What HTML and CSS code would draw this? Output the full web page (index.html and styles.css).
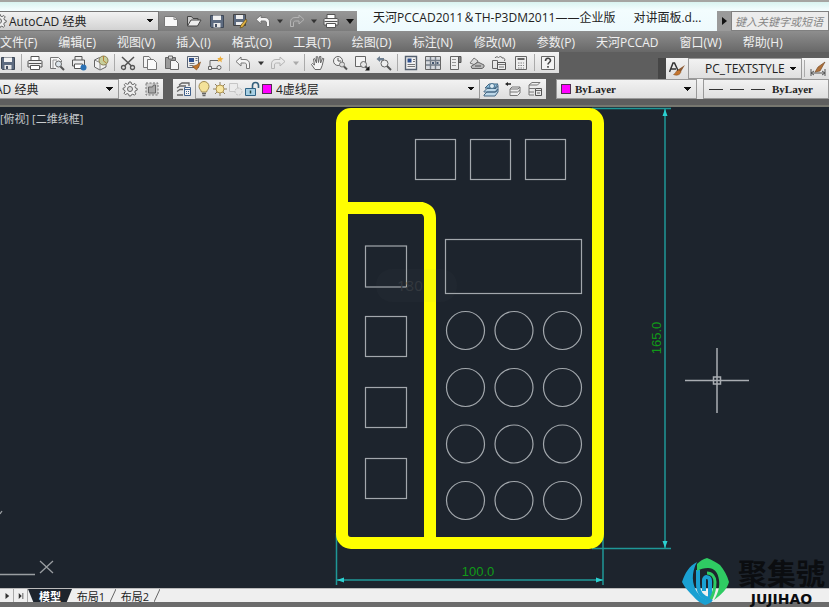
FILE: index.html
```html
<!DOCTYPE html>
<html lang="zh-CN">
  <head>
    <meta charset="UTF-8" />
    <meta name="viewport" content="width=device-width, initial-scale=1.0" />
    <title>天河PCCAD2011</title>
    <link rel="stylesheet" href="styles.css">
  </head>
  <body>
    <!-- icon set -->
    <svg class="sprite" aria-hidden="true">
      <symbol id="gear" viewBox="0 0 16 16"><path d="M7 1h2l.5 2 1.5.6L12.800 2.500l1.400 1.400L13 5.600l.5 1.400 1.700.5v1.600l-1.800.6-.6 1.400 1 1.800-1.300 1.300-1.700-1-1.500.6L8.800 15H7.200l-.6-1.800-1.500-.6-1.700 1-1.300-1.300 1-1.800-.6-1.400L1 8.500V7.200l1.700-.5.6-1.400-1-1.700 1.300-1.300 1.700 1L6.500 3z" fill="#eee" stroke="#666" /><circle cx="8" cy="8" r="2.500" fill="#ddd" stroke="#666" /></symbol>
      <symbol id="new" viewBox="0 0 16 16"><path d="M1.500 3.500h9.500l3.500 3v7h-13z" fill="#f8f8f8" stroke="#777" /><path d="M11 3.500v3h3.500" fill="none" stroke="#888" /></symbol>
      <symbol id="open" viewBox="0 0 16 16"><path d="M1.500 13V3.500h4l1.500 2h5V7" fill="#ccc" stroke="#444" /><path d="M1.500 13 5 7h10l-3.500 6z" fill="#eee" stroke="#444" /></symbol>
      <symbol id="save" viewBox="0 0 16 16"><path d="M1.500 2.500h13v12h-12l-1-1z" fill="#5d6b80" stroke="#3e4857" /><path d="M4 2.500h8v4.500H4z" fill="#f2f2f2" /><path d="M4.500 10h7v4.500h-7z" fill="#e8e8e8" /><path d="M6 11h2v3H6z" fill="#465063" /></symbol>
      <symbol id="saveas" viewBox="0 0 16 16"><path d="M1.500 1.500h12v11h-12z" fill="#5d6b80" stroke="#444" /><path d="M4 2h7v4H4zM4 9h7v3H4z" fill="#eee" /><path d="m14 6-5 6-1 3 3-1 4-6z" fill="#e0b040" stroke="#5c4a20" stroke-width=".7" /></symbol>
      <symbol id="undo" viewBox="0 0 16 16"><path d="M1 6.500 6 2v2.500h4c3 0 4.500 2 4.500 4.500v4.500h-3V10c0-1.500-1-2-2-2H6v3z" fill="#f4f4f4" stroke="#777" stroke-linejoin="round" /></symbol>
      <symbol id="redo" viewBox="0 0 16 16"><path d="M15 6.500 10 2v2.500H6C3 4.500 1.500 6.500 1.500 9v4.500h3V10c0-1.500 1-2 2-2H10v3z" fill="none" stroke="#b4b4b4" stroke-linejoin="round" /></symbol>
      <symbol id="print" viewBox="0 0 16 16"><path d="M4 6V1.500h8V6" fill="#fff" stroke="#555" /><path d="M1 6.500c0-.5.500-1 1-1h12c.500 0 1 .5 1 1V12H1z" fill="#eee" stroke="#555" /><path d="M1.500 8.500h13" stroke="#555" /><path d="M3.500 10.500h9v4h-9z" fill="#fff" stroke="#555" /></symbol>
      <symbol id="preview" viewBox="0 0 16 16"><path d="M7 13.500H1.500v-11h8l3 3V7" fill="#f6f6f6" stroke="#777" /><path d="M4 13V5h4" fill="none" stroke="#999" /><circle cx="9.500" cy="9" r="3" fill="#dde6ec" stroke="#666" /><path d="m11.500 11.500 3.500 3.500" stroke="#555" stroke-width="2" /></symbol>
      <symbol id="publish" viewBox="0 0 16 16"><path d="M4 5V1.500h7V5M1.500 5h12v6h-12z" fill="#eee" stroke="#555" /><path d="M3.500 9h8v4.500h-8z" fill="#fff" stroke="#555" /><circle cx="12.500" cy="12.500" r="3" fill="#2b72b5" /></symbol>
      <symbol id="box" viewBox="0 0 16 16"><path d="m1.500 5 5-2.500L13 5v7l-6 3-5.500-3z" fill="#f1f1f1" stroke="#666" /><path d="M1.500 5 7 7.500V15M7 7.500 13 5" fill="none" stroke="#888" /><circle cx="10.500" cy="5.500" r="4.500" fill="#c6cf9c" stroke="#8a7f55" /><path d="M10.500 1v5l3 2" fill="none" stroke="#b98236" /></symbol>
      <symbol id="cut" viewBox="0 0 16 16"><path d="m2 2 9.500 9M14 2l-9.500 9" stroke="#555" stroke-width="1.500" /><circle cx="3.500" cy="12.500" r="2" fill="none" stroke="#555" stroke-width="1.300" /><circle cx="12.500" cy="12.500" r="2" fill="none" stroke="#555" stroke-width="1.300" /></symbol>
      <symbol id="copy" viewBox="0 0 16 16"><path d="M1.500 1.500H7L9 4v8.500H1.500z" fill="#f4f4f4" stroke="#777" /><path d="M5.500 4.500h6l3 3v7h-9z" fill="#fafafa" stroke="#777" /></symbol>
      <symbol id="paste" viewBox="0 0 16 16"><path d="M1.500 2.500h10v11h-10z" fill="#9a9a9a" stroke="#666" /><path d="M4.500 1h4v3h-4z" fill="#ddd" stroke="#666" /><path d="M6.500 5.500h5l3 3v6h-8z" fill="#f6f6f6" stroke="#666" /></symbol>
      <symbol id="match" viewBox="0 0 16 16"><path d="M1.500 1.500h11v11h-11z" fill="#eee" stroke="#5a6474" /><path d="M3 3h5v4H3z" fill="#2d4f8e" /><path d="M9.500 3.500h2m-2 2h2m-8 3h5m-5 2h4" stroke="#777" /><path d="m14.500 7-4 3-4 1.500 4 3.500 2.500-3.500z" fill="#c2762b" stroke="#7d4a1a" stroke-width=".6" /></symbol>
      <symbol id="blockedit" viewBox="0 0 16 16"><path d="M2 12V5.500h8M1 13.500h9" fill="none" stroke="#666" /><path d="M.500 11.500h3v3h-3z" fill="#eee" stroke="#666" /><circle cx="11" cy="12.500" r="2" fill="#eee" stroke="#666" /><path d="m12.500 1 .7 2 2.300.5-2 1.500.3 2.500L12 6 9.500 7l1-2-1-2h2z" fill="#eeae3b" /></symbol>
      <symbol id="pan" viewBox="0 0 16 16"><path d="M5 14.500 1.500 9.500 2.500 8.500l2 1.500-1-6 1.200-.5L6.500 8 6.200 1.700h1.500L8.500 7.500l1-6h1.400l-.3 6.500 2-4.800 1.200.5-1.600 6.800-1.700 4z" fill="#f5f5f5" stroke="#666" stroke-linejoin="round" /></symbol>
      <symbol id="zoomrt" viewBox="0 0 16 16"><circle cx="6" cy="6" r="4.500" fill="#f2f2f2" stroke="#666" /><path d="M6 3v3h3" fill="none" stroke="#555" /><circle cx="10" cy="9.500" r="2.500" fill="#ddd" stroke="#777" /><path d="m12 11.500 3 3" stroke="#555" stroke-width="2" /></symbol>
      <symbol id="zoomwin" viewBox="0 0 16 16"><path d="M1.500 1.500h10v10h-10z" fill="#f4f4f4" stroke="#666" /><circle cx="9.500" cy="9.500" r="3" fill="#e6e6e6" stroke="#666" /><path d="m11.500 11.500 2 2" stroke="#555" stroke-width="2" /><path d="M15.500 11v4.500H11z" fill="#111" /></symbol>
      <symbol id="zoomprev" viewBox="0 0 16 16"><path d="M.500 4 4 1v2h4v2.500H4V7z" fill="#6e7f91" /><circle cx="8.500" cy="8.500" r="3.500" fill="#eee" stroke="#666" /><path d="m11 11 4 4" stroke="#555" stroke-width="2" /></symbol>
      <symbol id="props" viewBox="0 0 16 16"><path d="M2.500 1.500h11v13h-11z" fill="#f2f2f2" stroke="#55606f" stroke-width="1.400" /><path d="M4.500 3.500h4v4h-4z" fill="#2d4f8e" /><path d="M10 4.500h2M10 6.500h2m-7.500 3h7.500m-7.500 2h7.500" stroke="#777" /></symbol>
      <symbol id="design" viewBox="0 0 16 16"><path d="M.500 1.500h15v13H.500z" fill="#d7dade" stroke="#666" /><path d="M5.500 2v12M10.500 2v12M1 5.500h14M1 10h14" stroke="#747d88" stroke-width="1.400" /><path d="M7 7h2v2H7zm4.500 0h2v2h-2z" fill="#44566f" /></symbol>
      <symbol id="palette" viewBox="0 0 16 16"><path d="M3.500 1.500h8v13h-8z" fill="#eee" stroke="#666" /><path d="M5 4.500h4m-4 3h4m-4 3h4" stroke="#999" /><path d="M11.500 1.500h2.500v6h-2.500z" fill="#888" stroke="#555" /></symbol>
      <symbol id="sheet" viewBox="0 0 16 16"><path d="m1 8 4-5 4 3-3 4z" fill="#ddd" stroke="#777" /><path d="M2 11.500 9 7l6 3v2l-2 1.500H3z" fill="#b9b9b9" stroke="#666" /><path d="M6 11h6" stroke="#555" /></symbol>
      <symbol id="markup" viewBox="0 0 16 16"><path d="M1.500 5.500h5v8h-5zM4 3c1-2 3-1 3.500-.5C9 1 11 1.500 11 3c2-.5 3.500 1 2.500 3" fill="none" stroke="#666" /><path d="M6.500 7.500h8v7h-8z" fill="#eee" stroke="#555" /><path d="M7 9.500h7M8 12h5" stroke="#777" /></symbol>
      <symbol id="calc" viewBox="0 0 16 16"><path d="M2.500 1.500h11v13h-11z" fill="#eee" stroke="#666" /><path d="M4.500 4h7" stroke="#666" stroke-width="2" /><path d="M5 8h6m-6 2.500h6M5 13h6" stroke="#888" stroke-dasharray="1.500 1" /></symbol>
      <symbol id="help" viewBox="0 0 16 16"><path d="M1.500 1.500h13v13h-13z" fill="#f4f4f4" stroke="#666" /><path d="M5.500 6c0-3.500 5-3.500 5-.5 0 2-2.500 2-2.500 4M8 11v1.800" fill="none" stroke="#444" stroke-width="1.600" /></symbol>
      <symbol id="wsave" viewBox="0 0 16 16"><path d="M2 2h12v12H2z" fill="#cdcdcd" stroke="#777" stroke-dasharray="2 1.500" /><path d="M4.500 6h4l1-2h2v8h-7z" fill="#a7a7a7" stroke="#666" /></symbol>
      <symbol id="layers" viewBox="0 0 16 16"><path d="m1 7 3-2h6M1 10.500l3-2h3M1 14h6M3 4l3-2h7v3" fill="none" stroke="#666" stroke-width="1.300" /><path d="M8.500 6.500h6v8h-6z" fill="#f2f2f2" stroke="#41618c" /><path d="M9 8.500h5m-4 2h1m1 0h1m-3 2h1m1 0h1" stroke="#41618c" /></symbol>
      <symbol id="bulb" viewBox="0 0 16 16"><path d="M5.500 11C5 9 3 8 3 5.500a5 5 0 0 1 10 0C13 8 11 9 10.500 11z" fill="#f4e29a" stroke="#a28c52" /><path d="M6 12.500h4M6.500 14.500h3" stroke="#666" stroke-width="1.400" /></symbol>
      <symbol id="sun" viewBox="0 0 16 16"><path d="M8 1v14M1 8h14M3 3l10 10m0-10L3 13" stroke="#8c8064" /><circle cx="8" cy="8" r="4" fill="#f8e6a0" stroke="#b09550" /></symbol>
      <symbol id="freeze" viewBox="0 0 16 16"><path d="M1.500 2.500h8v8h-8z" fill="#ececec" stroke="#c6c6c6" /><circle cx="10.500" cy="10.500" r="3.500" fill="#e5e5e5" stroke="#bdbdbd" stroke-dasharray="2 1" /></symbol>
      <symbol id="lock" viewBox="0 0 16 16"><path d="M8.500 8V4.500a3 3 0 0 1 6 0V7" fill="none" stroke="#34607c" stroke-width="1.600" /><path d="M1.500 7.500h10v7h-10z" fill="#a7cfe3" stroke="#2e6385" /><path d="M6.500 9.500v3" stroke="#244" stroke-width="1.500" /></symbol>
      <symbol id="makecur" viewBox="0 0 16 16"><path d="m1 14 3-3h9l2-3v3l-3 4H1zM1 10.500l3-3h9l2-3v3l-3 3.500H1z" fill="#bcd7e8" stroke="#456783" /><path d="m2 7 4-4h9l-3 4z" fill="#8fbfdd" stroke="#3e6480" /><circle cx="9" cy="5" r="2.500" fill="#dcecf5" stroke="#4a7390" /></symbol>
      <symbol id="layprev" viewBox="0 0 16 16"><path d="m0 3 3-2v1.200h3v1.600H3V5z" fill="#222" /><path d="m5 8 2-2h8l-2 2zM5 8v3h7.500L15 9V6M5 11v3.500h7.500L15 12V9" fill="#eee" stroke="#777" /></symbol>
      <symbol id="laystate" viewBox="0 0 16 16"><path d="m2 4 3-2.500h8L10.500 4zM2 4v3.500h6M2 7.500V11h5M2 11v3h5" fill="#eee" stroke="#777" /><path d="M8.500 7.500h6v7h-6z" fill="#e8e8e8" stroke="#555" /><path d="M9 9.500h5M10 12h3" stroke="#666" /></symbol>
      <symbol id="brush" viewBox="0 0 16 16"><path d="m16 4-6 4-1 3 3-.5z" fill="#8c5a33" /><path d="M9.500 8.500C7 9 7.500 12 4.500 13.500c3 1.500 7 .5 7.500-3z" fill="#c5752e" stroke="#7b4618" stroke-width=".5" /><path d="M.500 11 4 2h1.500L9 9.500M2 8h5" fill="none" stroke="#333" stroke-width="1.500" /></symbol>
      <symbol id="dimstyle" viewBox="0 0 16 16"><path d="M1 8v7M15 8v7M1 12h14M4 10l-3 2 3 2m8-4 3 2-3 2" fill="none" stroke="#555" /><path d="m15 1-7 5-3 5 5-1z" fill="#b0713a" stroke="#6f4520" stroke-width=".6" /></symbol>
      <symbol id="caret" viewBox="0 0 8 8"><path d="M0 2h8L4 7z" /></symbol>
      <symbol id="last" viewBox="0 0 8 8"><path d="M1 0v8l4-4zM6 0h1v8H6z" /></symbol>
    </svg>

    <header class="titlebar">
      <div class="quick-access">
        <label class="workspace">
          <svg class="icon"><use href="#gear" /></svg>
          <select class="combo" aria-label="工作空间"><option>AutoCAD 经典</option></select>
        </label>
        <button class="qat" aria-label="新建"><svg class="icon"><use href="#new" /></svg></button>
        <button class="qat" aria-label="打开"><svg class="icon"><use href="#open" /></svg></button>
        <button class="qat" aria-label="保存"><svg class="icon"><use href="#save" /></svg></button>
        <button class="qat" aria-label="另存为"><svg class="icon"><use href="#saveas" /></svg></button>
        <button class="qat" aria-label="放弃"><svg class="icon"><use href="#undo" /></svg></button>
        <button class="drop" aria-label="放弃列表"><svg class="caret"><use href="#caret" /></svg></button>
        <button class="qat" aria-label="重做"><svg class="icon"><use href="#redo" /></svg></button>
        <button class="drop" aria-label="重做列表"><svg class="caret"><use href="#caret" /></svg></button>
        <button class="qat" aria-label="打印"><svg class="icon"><use href="#print" /></svg></button>
        <button class="drop customize" aria-label="自定义"><svg class="caret"><use href="#caret" /></svg></button>
      </div>
      <h1 class="title"><span>天河PCCAD2011＆TH-P3DM2011——企业版</span><span>对讲面板.d...</span></h1>
      <div class="search">
        <button class="expand" aria-label="展开"><svg class="caret right"><use href="#caret" /></svg></button>
        <input type="text" class="query" aria-label="搜索" placeholder="键入关键字或短语" />
      </div>
    </header>

    <nav class="menubar">
      <button>文件(F)</button>
      <button>编辑(E)</button>
      <button>视图(V)</button>
      <button>插入(I)</button>
      <button>格式(O)</button>
      <button>工具(T)</button>
      <button>绘图(D)</button>
      <button>标注(N)</button>
      <button>修改(M)</button>
      <button>参数(P)</button>
      <button>天河PCCAD</button>
      <button>窗口(W)</button>
      <button>帮助(H)</button>
    </nav>

    <div class="toolbars">
      <div class="bar standard">
        <button class="tool" aria-label="保存"><svg class="icon"><use href="#save" /></svg></button>
        <span class="sep"></span>
        <button class="tool" aria-label="打印"><svg class="icon"><use href="#print" /></svg></button>
        <button class="tool" aria-label="打印预览"><svg class="icon"><use href="#preview" /></svg></button>
        <button class="tool" aria-label="发布"><svg class="icon"><use href="#publish" /></svg></button>
        <button class="tool" aria-label="三维DWF"><svg class="icon"><use href="#box" /></svg></button>
        <span class="sep"></span>
        <button class="tool" aria-label="剪切"><svg class="icon"><use href="#cut" /></svg></button>
        <button class="tool" aria-label="复制"><svg class="icon"><use href="#copy" /></svg></button>
        <button class="tool" aria-label="粘贴"><svg class="icon"><use href="#paste" /></svg></button>
        <button class="tool" aria-label="特性匹配"><svg class="icon"><use href="#match" /></svg></button>
        <button class="tool" aria-label="块编辑器"><svg class="icon"><use href="#blockedit" /></svg></button>
        <span class="sep"></span>
        <button class="tool" aria-label="放弃"><svg class="icon"><use href="#undo" /></svg></button>
        <button class="drop" aria-label="放弃列表"><svg class="caret"><use href="#caret" /></svg></button>
        <button class="tool" aria-label="重做"><svg class="icon"><use href="#redo" /></svg></button>
        <button class="drop faded" aria-label="重做列表"><svg class="caret"><use href="#caret" /></svg></button>
        <span class="sep"></span>
        <button class="tool" aria-label="平移"><svg class="icon"><use href="#pan" /></svg></button>
        <button class="tool" aria-label="实时缩放"><svg class="icon"><use href="#zoomrt" /></svg></button>
        <button class="tool" aria-label="窗口缩放"><svg class="icon"><use href="#zoomwin" /></svg></button>
        <button class="tool" aria-label="缩放上一个"><svg class="icon"><use href="#zoomprev" /></svg></button>
        <span class="sep"></span>
        <button class="tool" aria-label="特性"><svg class="icon"><use href="#props" /></svg></button>
        <button class="tool" aria-label="设计中心"><svg class="icon"><use href="#design" /></svg></button>
        <button class="tool" aria-label="工具选项板"><svg class="icon"><use href="#palette" /></svg></button>
        <button class="tool" aria-label="图纸集"><svg class="icon"><use href="#sheet" /></svg></button>
        <button class="tool" aria-label="标记集"><svg class="icon"><use href="#markup" /></svg></button>
        <button class="tool" aria-label="计算器"><svg class="icon"><use href="#calc" /></svg></button>
        <span class="sep"></span>
        <button class="tool" aria-label="帮助"><svg class="icon"><use href="#help" /></svg></button>
      </div>
      <div class="bar styles">
        <button class="tool" aria-label="文字样式"><svg class="icon"><use href="#brush" /></svg></button>
        <select class="combo textstyle" aria-label="文字样式列表"><option>PC_TEXTSTYLE</option></select>
        <span class="sep"></span>
        <button class="tool" aria-label="标注样式"><svg class="icon"><use href="#dimstyle" /></svg></button>
      </div>
    </div>

    <div class="toolbars lower">
      <div class="bar spaces">
        <select class="combo space" aria-label="工作空间列表"><option>AutoCAD 经典</option></select>
        <button class="tool" aria-label="工作空间设置"><svg class="icon"><use href="#gear" /></svg></button>
        <button class="tool" aria-label="我的工作空间"><svg class="icon"><use href="#wsave" /></svg></button>
      </div>
      <div class="bar layerbar">
        <button class="tool" aria-label="图层特性"><svg class="icon"><use href="#layers" /></svg></button>
        <label class="layer">
          <svg class="icon"><use href="#bulb" /></svg>
          <svg class="icon"><use href="#sun" /></svg>
          <svg class="icon"><use href="#freeze" /></svg>
          <svg class="icon"><use href="#lock" /></svg>
          <span class="swatch"></span>
          <select class="combo" aria-label="图层"><option>4虚线层</option></select>
        </label>
        <button class="tool" aria-label="置为当前"><svg class="icon"><use href="#makecur" /></svg></button>
        <button class="tool" aria-label="上一个图层"><svg class="icon"><use href="#layprev" /></svg></button>
        <button class="tool" aria-label="图层状态"><svg class="icon"><use href="#laystate" /></svg></button>
      </div>
      <div class="bar propbar">
        <label class="color">
          <span class="swatch"></span>
          <select class="combo bylayer" aria-label="颜色"><option>ByLayer</option></select>
        </label>
        <label class="linetype">
          <span class="dash"></span><span class="dash"></span><span class="dash"></span>
          <select class="combo bylayer" aria-label="线型"><option>ByLayer</option></select>
        </label>
      </div>
    </div>

    <main class="canvas">
      <svg class="drawing" viewBox="0 107 829 481" preserveAspectRatio="xMidYMid slice">
        <!-- dimensions -->
        <g fill="none" stroke="#1f9797" stroke-width="1.500">
          <path d="M592 108.500h79M592 548.500h79M665 109v439" />
          <path d="M336.500 533v52M603 533v52M337 580h266" />
        </g>
        <path fill="#2bd0d0" d="m337 580 7-2.500v5zm266 0-7-2.500v5zM665 109l-2.500 7h5zm0 439-2.500-7h5z" />
        <text class="dim" x="478" y="576">100.0</text>
        <text class="dim" transform="translate(661 338) rotate(-90)">165.0</text>
        <!-- housing -->
        <g fill="none" stroke="#ffff00" stroke-width="12">
          <rect x="342" y="114" width="256" height="429" rx="9" />
          <path d="M342 208h80q8 2 8 10v325" />
        </g>
        <!-- keys -->
        <g fill="none" stroke="#a3a8ad" stroke-width="1.200">
          <rect x="415.500" y="139.500" width="40" height="40" />
          <rect x="470.500" y="139.500" width="40" height="40" />
          <rect x="525.500" y="139.500" width="40" height="40" />
          <rect x="365.500" y="246" width="41" height="41" />
          <rect x="365.500" y="316.500" width="41" height="40" />
          <rect x="365.500" y="387.500" width="41" height="40" />
          <rect x="365.500" y="458.500" width="41" height="40" />
          <rect x="445.500" y="239.500" width="136" height="54" />
          <circle cx="465.500" cy="330.500" r="19" />
          <circle cx="514" cy="330.500" r="19" />
          <circle cx="562.500" cy="330.500" r="19" />
          <circle cx="465.500" cy="387.500" r="19" />
          <circle cx="514" cy="387.500" r="19" />
          <circle cx="562.500" cy="387.500" r="19" />
          <circle cx="465.500" cy="444" r="19" />
          <circle cx="514" cy="444" r="19" />
          <circle cx="562.500" cy="444" r="19" />
          <circle cx="465.500" cy="500.500" r="19" />
          <circle cx="514" cy="500.500" r="19" />
          <circle cx="562.500" cy="500.500" r="19" />
        </g>
        <!-- crosshair -->
        <path d="M685 380.500h64M717 348v65M713.500 377h7v7h-7z" fill="none" stroke="#a9adb2" stroke-width="1.500" />
        <!-- ucs mark -->
        <path d="M0 574.500h35M40 561l13 12m0-12-13 12M0 514l2-3" fill="none" stroke="#9a9ea2" stroke-width="1.300" />
        <rect x="376" y="269" width="81" height="33" rx="16" fill="#888" fill-opacity=".04" />
        <text class="hint" x="397" y="291">180</text>
      </svg>
      <div class="viewlabel">[俯视] [二维线框]</div>
    </main>

    <footer class="tabs">
      <button class="step" aria-label="下一个"><svg class="caret right"><use href="#caret" /></svg></button>
      <button class="step" aria-label="最后一个"><svg class="caret"><use href="#last" /></svg></button>
      <button class="tab active">模型</button>
      <button class="tab">布局1</button>
      <svg class="slash" viewBox="0 0 6 13"><path d="M0 13 6 0" /></svg>
      <button class="tab">布局2</button>
      <svg class="slash" viewBox="0 0 6 13"><path d="M0 13 6 0" /></svg>
    </footer>

    <div class="brand">
      <svg class="mark" viewBox="0 0 50 50">
        <path d="M15 6C7 10 3 17 0 26c3 6 7 10 11 14 4 5 8 7 12 9 3-1 6-2 8-5-6 1-12-2-16-8-5-8-6-19 0-30z" fill="#1aa0d2" />
        <path d="M16 14v14c0 8 4 14 12 15V25c0-5-6-5-6-1v11" fill="none" stroke="#1aa0d2" stroke-width="4" />
        <path d="M15 15V8c3-3 6-5 10-6 5 2 9 4 13 7 4 5 7 10 9 17-2 7-7 12-15 18 4-7 6-13 5-20-1-8-5-12-11-12-4 0-8 1-11 3z" fill="#2fcb63" />
        <path d="M25 17c5 0 8 4 8 9 0 6-1 11-4 17" fill="none" stroke="#2fcb63" stroke-width="3" />
      </svg>
      <div class="wordmark">
        <span class="cn">聚集號</span>
        <span class="en">JUJIHAO</span>
      </div>
    </div>
  </body>
</html>
```

FILE: styles.css
```css
* {
  box-sizing: border-box;
}
body {
  margin: 0;
  height: 100vh;
  display: flex;
  flex-direction: column;
  overflow: hidden;
  position: relative;
  background-color: #5e5e5e;
  font-family: "Open Sans", "Noto Sans CJK SC", sans-serif;
  font-size: 12px;
  color: #222;
}
button,
select,
input {
  font: inherit;
  color: inherit;
  margin: 0;
  padding: 0;
  border: 0;
  background: none;
  border-radius: 0;
}
button {
  display: flex;
  align-items: center;
  justify-content: center;
  flex-shrink: 0;
  white-space: nowrap;
}
.sprite {
  display: none;
}
.icon {
  width: 16px;
  height: 16px;
  flex-shrink: 0;
}
.caret {
  width: 6px;
  height: 6px;
  fill: #333;
}
.caret.right {
  transform: rotate(-90deg);
}
.combo {
  appearance: none;
  min-width: 0;
  height: 100%;
  flex: 1;
  background: linear-gradient(to bottom right, #111 50%, transparent 50%) right 4px center / 4px 4px no-repeat,
    linear-gradient(to bottom left, #111 50%, transparent 50%) right 8px center / 4px 4px no-repeat;
}

/* title bar */
.titlebar {
  display: flex;
  height: 31px;
  padding-top: 9px;
  border-top: 2px solid #a5a5a2;
  background: linear-gradient(#d9f3f0, #f3fdfe 8px, #eefafd);
}
.quick-access {
  display: flex;
  background: linear-gradient(#979797, #7c7c7c);
}
.workspace {
  display: flex;
  align-items: center;
  width: 169px;
  margin-left: -10px;
  border: 1px solid #777;
  background: linear-gradient(#f2f2f2, #d2d2d2);
}
.workspace .combo {
  padding-left: 2px;
}
.qat {
  width: 23px;
}
.drop {
  width: 11px;
}
.faded .caret {
  fill: #aaa;
}
.customize {
  width: 15px;
}
.customize .caret {
  width: 8px;
  height: 8px;
  fill: #111;
}
.title {
  flex: 1;
  display: flex;
  gap: 18px;
  min-width: 0;
  margin: -8px 0 0;
  padding-left: 16px;
  align-items: center;
  font-size: 12px;
  font-weight: normal;
  white-space: nowrap;
  overflow: hidden;
}
.search {
  display: flex;
  width: 112px;
}
.expand {
  width: 14px;
  background-color: #9a9a9a;
}
.expand .caret {
  width: 8px;
  height: 8px;
  fill: #111;
}
.query {
  flex: 1;
  min-width: 0;
  padding-left: 3px;
  border: 1px solid #808080;
  background-color: #ececec;
  font-size: 11px;
  font-style: italic;
}
.query::placeholder {
  color: #858585;
}

/* menus */
.menubar {
  display: flex;
  gap: 21px;
  height: 21px;
  background: linear-gradient(#8e8e8e, #686868);
  color: #f0f0f0;
}

/* toolbars */
.toolbars {
  display: flex;
  justify-content: space-between;
  height: 27px;
}
.bar {
  display: flex;
  align-items: center;
  height: 21px;
  background: linear-gradient(#f3f3f3, #dedede);
}
.standard {
  margin-left: -3px;
}
.tool {
  width: 22px;
}
.standard .drop {
  width: 13px;
}
.sep {
  width: 1px;
  height: 17px;
  margin: 0 2px;
  background-color: #aaa;
}
.styles {
  align-self: flex-end;
  width: 171px;
  border-left: 8px solid #464646;
}
.textstyle {
  padding-left: 16px;
  border: 1px solid #999;
}
.lower {
  height: 28px;
  gap: 10px;
  padding-bottom: 8px;
  border-bottom: 2px solid #77776f;
}
.lower .bar {
  height: 20px;
}
.spaces {
  width: 203px;
  margin-left: -40px;
}
.space {
  border: 1px solid #999;
}
.layerbar {
  flex: 1;
  min-width: 0;
}
.layer,
.color,
.linetype {
  display: flex;
  align-items: center;
  height: 100%;
  border: 1px solid #999;
}
.layer {
  flex: 1;
  min-width: 0;
}
.layer .swatch {
  margin-left: 2px;
}
.swatch {
  width: 10px;
  height: 10px;
  margin-right: 4px;
  flex-shrink: 0;
  border: 1px solid #503050;
  background-color: #f0f;
}
.propbar {
  width: 273px;
  gap: 6px;
}
.color {
  width: 141px;
  padding-left: 4px;
}
.linetype {
  flex: 1;
  gap: 7px;
  padding-left: 5px;
  min-width: 0;
  overflow: hidden;
}
.dash {
  width: 14px;
  height: 1px;
  flex-shrink: 0;
  background-color: #333;
}
.bylayer {
  font-family: "Liberation Serif", serif;
  font-size: 11px;
  font-weight: bold;
}
.linetype .bylayer {
  background: none;
}

/* drawing area */
.canvas {
  flex: 1;
  min-height: 0;
  position: relative;
  background-color: #1d242d;
}
.drawing {
  display: block;
  width: 100%;
  height: 100%;
}
.dim {
  font-family: "Liberation Sans", sans-serif;
  font-size: 13px;
  text-anchor: middle;
  fill: #109a18;
}
.hint {
  font-size: 15px;
  fill: #34393f;
}
.viewlabel {
  position: absolute;
  left: 0;
  top: 3px;
  font-size: 11px;
  color: #c8cbce;
}

/* layout tabs */
.tabs {
  display: flex;
  height: 19px;
  border-top: 1px solid #bbb;
  border-bottom: 5px solid #6b6b6b;
  background-color: #efefef;
}
.step {
  width: 14px;
  border-right: 1px solid #aaa;
}
.tab {
  width: 38px;
  font-size: 11px;
}
.active {
  width: 44px;
  clip-path: polygon(0 0, 100% 0, 88% 100%, 12% 100%);
  background-color: #1d242d;
  color: #fff;
  font-weight: bold;
}
.slash {
  width: 6px;
  height: 13px;
  fill: none;
  stroke: #666;
}

/* logo over the corner */
.brand {
  position: absolute;
  right: 4px;
  bottom: 1px;
  display: flex;
  align-items: flex-end;
  gap: 6px;
  color: #0b0d10;
}
.mark {
  width: 50px;
  height: 50px;
}
.wordmark {
  display: flex;
  flex-direction: column;
  align-items: center;
}
.cn {
  font-size: 29px;
  font-weight: bold;
  line-height: 36px;
}
.en {
  font-family: "DejaVu Sans", sans-serif;
  font-size: 14px;
  font-weight: bold;
  line-height: 14px;
}
```
